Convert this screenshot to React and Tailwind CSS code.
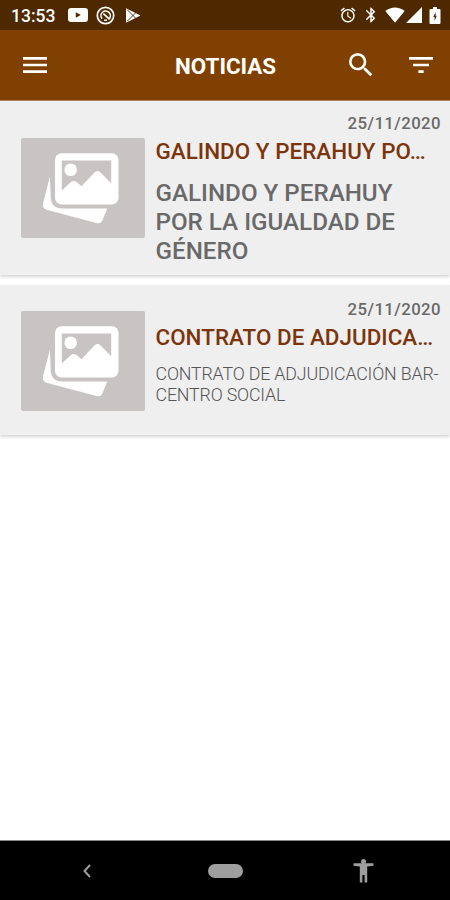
import {
  MdMenu,
  MdSearch,
  MdFilterList,
  MdAlarm,
  MdBluetooth,
} from 'react-icons/md'

const news = [
  {
    id: 1,
    date: '25/11/2020',
    title: 'GALINDO Y PERAHUY PO…',
    lines: ['GALINDO Y PERAHUY', 'POR LA IGUALDAD DE', 'GÉNERO'],
    textClass: 'pt-[15px] text-[24.2px] leading-[28.8px] font-medium text-[#696969]',
    cardClass: 'h-[174px] pt-[12px]',
    thumbClass: 'mt-[25px]',
  },
  {
    id: 2,
    date: '25/11/2020',
    title: 'CONTRATO DE ADJUDICA…',
    lines: ['CONTRATO DE ADJUDICACIÓN BAR-', 'CENTRO SOCIAL'],
    textClass: 'pt-[14px] text-[17.8px] leading-[20.8px] font-light tracking-[-0.16px] text-[#555]',
    cardClass: 'h-[150px] pt-[14px]',
    thumbClass: 'mt-[12px]',
  },
]

function StatusBar() {
  return (
    <div className="flex h-[30px] shrink-0 items-center bg-[#4e2900] pl-[11px] pr-[9px] text-white">
      <span className="w-[56.5px] text-[17.5px] leading-5 font-medium mt-[2px]">13:53</span>
      <svg className="h-[14px] w-[20px]" viewBox="0 0 20 14">
        <rect width="20" height="14" rx="3.2" fill="#fff" />
        <path d="M7.8 4.2v5.6l5-2.8z" fill="#4e2900" />
      </svg>
      <svg className="ml-[8px] h-[19px] w-[19px]" viewBox="0 0 19 19" fill="none" stroke="#fff">
        <circle cx="9.5" cy="9.5" r="8.2" strokeWidth="1.7" />
        <path d="M6 12.7a4.7 4.7 0 1 1 7.2.1M8.2 14q1.4.5 2.8 0" strokeWidth="1.6" />
        <path d="M7.4 7.6l6.2 5.8" strokeWidth="1.8" />
      </svg>
      <svg className="ml-[10px] h-[15px] w-[16px]" viewBox="0 0 16 15">
        <path d="M1 .3 15.5 7.5 1 14.7z" fill="#fff" />
        <path d="M2 1.5 11.5 11M2 13.5 11.5 4" stroke="#4e2900" strokeWidth=".9" fill="none" />
      </svg>
      <div className="ml-auto flex items-center">
        <MdAlarm className="h-[18px] w-[18px]" />
        <MdBluetooth className="ml-[5px] h-[18px] w-[18px]" />
        <svg className="ml-[5px] h-[16px] w-[20px]" viewBox="0 0 20 16">
          <path d="M.3 4C6 -.7 14 -.7 19.7 4L10 15.8z" fill="#fff" />
        </svg>
        <svg className="ml-[1px] h-[16px] w-[16px]" viewBox="0 0 16 16">
          <path d="M16 0v16H0z" fill="#fff" />
        </svg>
        <svg className="ml-[7px] h-[17px] w-[12px]" viewBox="0 0 12 17">
          <path d="M4 0h4v2h2.5a1 1 0 0 1 1 1v13a1 1 0 0 1-1 1h-9a1 1 0 0 1-1-1V3a1 1 0 0 1 1-1H4z" fill="#fff" />
          <path d="M6.6 5 4.3 10h1.3v4l2.2-5.2H6.6z" fill="#4e2900" />
        </svg>
      </div>
    </div>
  )
}

function Thumbnail({ className }) {
  return (
    <div className={`h-[100px] w-[124px] shrink-0 rounded-[2px] bg-[#c8c4c3] ${className}`}>
      <svg viewBox="0 0 124 100" className="h-full w-full">
        <path
          d="M28.9 38.5 22 65.5q-1 4.5 3.5 6.3L75.5 85q4.5 1.2 6-3l4.8-11.5H41.5Q29.7 70.5 29.7 58.5z"
          fill="#fff"
        />
        <rect x="34" y="15.3" width="63.5" height="51.2" rx="6.5" fill="#fff" />
        <path
          d="M40.8 22.4h49.4v22.8L79.3 34.2q-2.8-2.6-5.6 0L60.4 48.2l-4.7-4.1q-2.9-2.2-5.8 0l-9.1 8.4z"
          fill="#c8c4c3"
        />
        <circle cx="49.7" cy="31.8" r="6.3" fill="#fff" />
      </svg>
    </div>
  )
}

function NewsCard({ item }) {
  return (
    <article
      className={`flex shrink-0 bg-[#efefef] pl-[21px] pr-[9px] shadow-[0_2px_3px_rgba(0,0,0,0.16)] ${item.cardClass}`}
    >
      <Thumbnail className={item.thumbClass} />
      <div className="ml-[10.5px] min-w-0 flex-1 whitespace-nowrap">
        <p className="text-right text-[16.8px] leading-[20px] font-medium tracking-[0.4px] text-[#696969]">
          {item.date}
        </p>
        <h2 className="pt-[5px] text-[22.4px] leading-[26px] font-medium tracking-[0.04px] text-[#7b340b]">
          {item.title}
        </h2>
        <div className={item.textClass}>
          {item.lines.map((line) => (
            <p key={line}>{line}</p>
          ))}
        </div>
      </div>
    </article>
  )
}

function App() {
  return (
    <div className="flex h-[900px] w-[450px] flex-col overflow-hidden bg-white font-['Roboto',sans-serif]">
      <StatusBar />
      <header className="flex h-[71px] shrink-0 items-center border-b border-[#b5806a] bg-[#7f4000] pl-[19px] pr-[13px] text-white">
        <button aria-label="Menú">
          <MdMenu className="h-8 w-8" />
        </button>
        <h1 className="ml-[124px] mt-[2px] text-[22.4px] leading-7 font-bold">NOTICIAS</h1>
        <button aria-label="Buscar" className="ml-auto">
          <MdSearch className="h-8 w-8" />
        </button>
        <button aria-label="Filtrar" className="ml-[28px]">
          <MdFilterList className="h-8 w-8" />
        </button>
      </header>

      <main className="flex flex-1 flex-col gap-[10px]">
        {news.map((item) => (
          <NewsCard key={item.id} item={item} />
        ))}
      </main>

      <nav className="flex h-[60px] shrink-0 items-center border-t border-[#888] bg-black pl-[83px] text-[#9e9e9e]">
        <svg className="h-[14px] w-[8px]" viewBox="0 0 8 14" fill="none" stroke="currentColor" strokeWidth="2">
          <path d="M7 1 1.5 7 7 13" />
        </svg>
        <span className="ml-[117px] h-[14px] w-[35px] rounded-full bg-[#9e9e9e]" />
        <svg className="ml-[110px] h-[24px] w-[21px]" viewBox="0 0 21 24" fill="currentColor">
          <circle cx="10.5" cy="2.6" r="2.5" />
          <path d="M.5 4.2h20v2.6l-6.3.8v15.9h-2.6V16H9.4v7.500H6.800V7.600L.5 6.800z" />
        </svg>
      </nav>
    </div>
  )
}

export default App
